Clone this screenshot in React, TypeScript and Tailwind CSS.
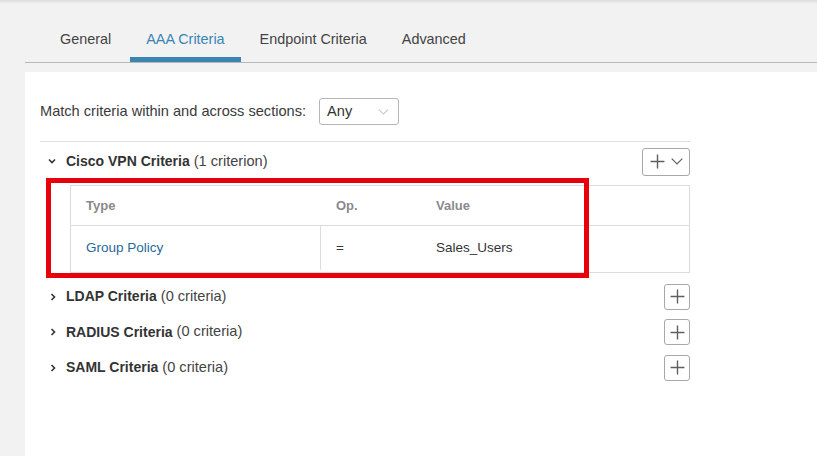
import React from 'react';

const tabs = ['General', 'AAA Criteria', 'Endpoint Criteria', 'Advanced'];

const PlusIcon = ({ size = 14 }: { size?: number }) => (
  <svg width={size} height={size} viewBox="0 0 14 14" fill="none">
    <path d="M7 0.5V13.5M0.5 7H13.5" stroke="#5f5f5f" strokeWidth="1.3" />
  </svg>
);

const ChevronDown = ({ color = '#5f5f5f', w = 12, h = 7 }: { color?: string; w?: number; h?: number }) => (
  <svg width={w} height={h} viewBox="0 0 12 7" fill="none">
    <path d="M0.7 0.7L6 6L11.3 0.7" stroke={color} strokeWidth="1.2" />
  </svg>
);

const SmallChevron = ({ open }: { open: boolean }) => (
  <svg width="8" height="8" viewBox="0 0 8 8" fill="none" className={open ? '' : '-rotate-90'}>
    <path d="M1 2.5L4 5.5L7 2.5" stroke="#333" strokeWidth="1.6" />
  </svg>
);

const collapsed = [
  { name: 'LDAP Criteria', count: '(0 criteria)' },
  { name: 'RADIUS Criteria', count: '(0 criteria)' },
  { name: 'SAML Criteria', count: '(0 criteria)' },
];

export default function App() {
  return (
    <div
      className="relative h-[456px] w-[817px] overflow-hidden bg-[#f2f2f2] text-[#333]"
      style={{ fontFamily: '"Liberation Sans", Arial, sans-serif' }}
    >
      {/* top shadow */}
      <div className="h-[4px] bg-gradient-to-b from-[#dcdcdc] to-[#f2f2f2]" />

      {/* Tabs */}
      <div className="ml-[25px] mt-[16px] flex border-b border-[#b8b8b8] pl-[19px]">
        {tabs.map((t, i) => (
          <div
            key={t}
            className={`relative mr-[3px] h-[42px] px-[16px] pt-[9px] text-[14.4px] leading-[20px] ${
              i === 1 ? 'text-[#3a85b4]' : 'text-[#444]'
            }`}
          >
            {t}
            {i === 1 && <div className="absolute bottom-0 left-0 h-[5px] w-full bg-[#3a85b4]" />}
          </div>
        ))}
      </div>

      {/* Panel */}
      <div className="ml-[25px] mt-[9px] h-[400px] bg-white pl-[15px] pt-[26px]">
        <div className="flex items-center text-[14.6px]">
          <span className="text-[#3a3a3a]">Match criteria within and across sections:</span>
          <div className="ml-[13px] flex h-[27px] w-[80px] items-center justify-between rounded-[3px] border border-[#b5b5b5] pl-[7px] pr-[9px]">
            <span className="text-[#333]">Any</span>
            <ChevronDown color="#c4c4c4" w={11} h={6} />
          </div>
        </div>

        <div className="mt-[16px] w-[650px] border-t border-[#dedede]">
          {/* Cisco VPN */}
          <div className="flex h-[37px] items-center justify-between pt-[2px]">
            <div className="flex items-center pl-[8px]">
              <SmallChevron open />
              <span className="ml-[10px] text-[14px] font-bold text-[#333]">Cisco VPN Criteria</span>
              <span className="ml-[4px] text-[14.6px] text-[#444]">(1 criterion)</span>
            </div>
            <div className="flex h-[28px] w-[48px] items-center justify-center gap-[6px] rounded-[3px] border border-[#a8a8a8]">
              <PlusIcon size={15} />
              <ChevronDown w={12} h={7} />
            </div>
          </div>

          {/* Table */}
          <div className="ml-[30px] mt-[6px] border border-[#dcdcdc]">
            <div className="flex h-[40px] items-center border-b border-[#dcdcdc] text-[13px] font-bold text-[#8a8a8e]">
              <div className="w-[250px] pl-[15px]">Type</div>
              <div className="w-[100px] pl-[15px]">Op.</div>
              <div className="pl-[15px]">Value</div>
            </div>
            <div className="flex h-[46px] pb-[2px] text-[13.5px]">
              <div className="flex w-[250px] items-center border-r border-[#dcdcdc] pl-[15px] text-[#1f6a9b]">
                Group Policy
              </div>
              <div className="flex w-[100px] items-center pl-[15px] text-[#333]">=</div>
              <div className="flex items-center pl-[15px] text-[#333]">Sales_Users</div>
            </div>
          </div>

          {/* Collapsed sections */}
          <div className="mt-[6px]">
            {collapsed.map((c) => (
              <div key={c.name} className="flex h-[35.5px] items-center justify-between">
                <div className="flex items-center pl-[9px]">
                  <SmallChevron open={false} />
                  <span className="ml-[9px] text-[14px] font-bold text-[#333]">{c.name}</span>
                  <span className="ml-[4px] text-[14.6px] text-[#444]">{c.count}</span>
                </div>
                <div className="flex h-[26px] w-[26px] items-center justify-center rounded-[3px] border border-[#a8a8a8]">
                  <PlusIcon size={15} />
                </div>
              </div>
            ))}
          </div>
        </div>
      </div>

      {/* annotation */}
      <div className="absolute left-[46px] top-[178px] h-[100px] w-[543px] border-[5px] border-[#e8000b]" />
    </div>
  );
}
